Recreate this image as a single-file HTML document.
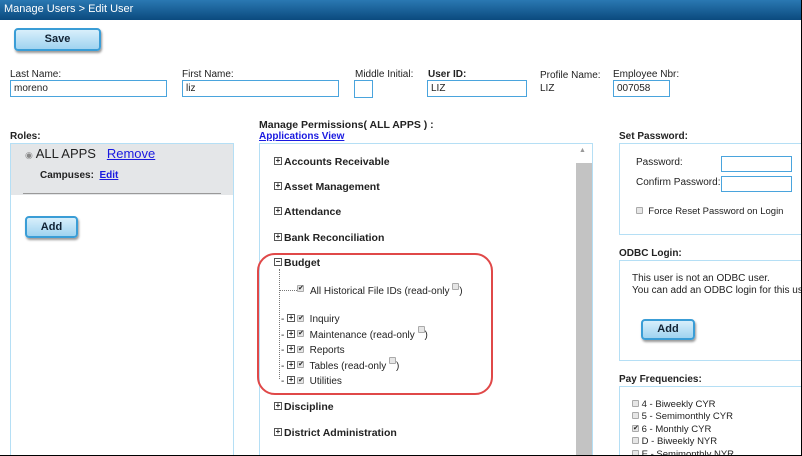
<!DOCTYPE html>
<html><head><style>
*{margin:0;padding:0;box-sizing:border-box}
html,body{width:802px;height:456px;overflow:hidden}
body{background:#fff;font-family:"Liberation Sans",sans-serif;font-size:10px;color:#222;position:relative}
.a{position:absolute;white-space:nowrap}
.hdr{left:0;top:0;width:802px;height:20px;background:linear-gradient(#2a78b2,#0b4a7e);color:#fff;font-size:11px;padding:3px 4px}
.btn{position:absolute;border:2px solid #3a9dd6;border-radius:4px;background:linear-gradient(#d8effb,#9fd3f0);font-weight:bold;font-size:11px;color:#123;text-align:center;box-shadow:1px 2px 2px #999}
.inp{position:absolute;border:1.5px solid #4aa4dd;height:17px;font-size:10px;padding:2px 3px;background:#fff}
.b{font-weight:bold}
.box{position:absolute;border:1px solid #b5dff5}
.pl{font-weight:bold;font-size:10.5px}
.pm{display:inline-block;width:8px;height:8px;border:1px solid #555;vertical-align:middle;margin-right:2px;font-size:8px;line-height:6px;text-align:center;font-weight:bold;position:relative;top:-1px}
.cb{display:inline-block;width:7px;height:7px;border:1px solid #aaa;background:#e6e6e6;border-radius:1px;font-size:7px;line-height:6px;text-align:center;vertical-align:middle;position:relative;top:-1px}
.up{top:-5px}
a{color:#1a1ae0}
.frame{position:absolute;left:0;top:0;width:802px;height:456px;border-right:1px solid #000;border-bottom:1px solid #000;pointer-events:none}
</style></head><body>
<div class="a hdr">Manage Users &gt; Edit User</div>
<div class="btn" style="left:14px;top:28px;width:87px;height:23px;line-height:19px">Save</div>
<div class="a" style="left:10px;top:69px">Last Name:</div>
<div class="inp" style="left:10px;top:80px;width:157px">moreno</div>
<div class="a" style="left:182px;top:69px">First Name:</div>
<div class="inp" style="left:182px;top:80px;width:157px">liz</div>
<div class="a" style="left:355px;top:69px">Middle Initial:</div>
<div class="inp" style="left:354px;top:80px;width:19px;height:18px"></div>
<div class="a b" style="left:428px;top:69px">User ID:</div>
<div class="inp" style="left:427px;top:80px;width:100px">LIZ</div>
<div class="a" style="left:540px;top:70px">Profile Name:</div>
<div class="a" style="left:540px;top:83px">LIZ</div>
<div class="a" style="left:613px;top:69px">Employee Nbr:</div>
<div class="inp" style="left:613px;top:80px;width:57px">007058</div>

<div class="a b" style="left:10px;top:131px">Roles:</div>
<div class="box" style="left:10px;top:143px;width:224px;height:320px"></div>
<div class="a" style="left:11px;top:144px;width:222px;height:51px;background:#e4e6e8"></div>
<div class="a" style="left:25px;top:146px;font-size:13px"><span style="color:#888;font-size:9px">◉</span> ALL APPS &nbsp;&nbsp;<a href="#" style="text-decoration:underline">Remove</a></div>
<div class="a b" style="left:40px;top:170px">Campuses: &nbsp;<a href="#">Edit</a></div>
<div class="a" style="left:23px;top:193px;width:198px;height:1px;background:#999"></div>
<div class="btn" style="left:25px;top:216px;width:53px;height:22px;line-height:18px">Add</div>

<div class="a b" style="left:259px;top:119px;font-size:10.5px">Manage Permissions( ALL APPS ) :</div>
<div class="a b" style="left:259px;top:131px"><a href="#">Applications View</a></div>
<div class="box" style="left:259px;top:143px;width:334px;height:320px"></div>
<div class="a" style="left:576px;top:163px;width:16px;height:300px;background:#c3c3c3"></div>
<div class="a" style="left:579px;top:147px;color:#999;font-size:7px">▲</div>
<div class="a pl" style="left:274px;top:156px"><span class="pm">+</span>Accounts Receivable</div>
<div class="a pl" style="left:274px;top:181px"><span class="pm">+</span>Asset Management</div>
<div class="a pl" style="left:274px;top:206px"><span class="pm">+</span>Attendance</div>
<div class="a pl" style="left:274px;top:232px"><span class="pm">+</span>Bank Reconciliation</div>
<div class="a pl" style="left:274px;top:257px"><span class="pm">−</span>Budget</div>
<div class="a" style="left:279px;top:269px;height:110px;border-left:1px dotted #777"></div>
<div class="a" style="left:279px;top:290px;width:18px;border-top:1px dotted #777"></div>
<div class="a" style="left:297px;top:284px"><span class="cb">✔</span></div>
<div class="a" style="left:310px;top:286px">All Historical File IDs (read-only <span class="cb up"></span>)</div>
<div class="a" style="left:281px;top:312px;line-height:15.5px;font-size:10px">
<div>- <span class="pm">+</span><span class="cb">✔</span>&nbsp; Inquiry</div>
<div>- <span class="pm">+</span><span class="cb">✔</span>&nbsp; Maintenance (read-only <span class="cb up"></span>)</div>
<div>- <span class="pm">+</span><span class="cb">✔</span>&nbsp; Reports</div>
<div>- <span class="pm">+</span><span class="cb">✔</span>&nbsp; Tables (read-only <span class="cb up"></span>)</div>
<div>- <span class="pm">+</span><span class="cb">✔</span>&nbsp; Utilities</div>
</div>
<div class="a" style="left:257px;top:253px;width:236px;height:142px;border:2.5px solid #e04848;border-radius:18px"></div>
<div class="a pl" style="left:274px;top:401px"><span class="pm">+</span>Discipline</div>
<div class="a pl" style="left:274px;top:427px"><span class="pm">+</span>District Administration</div>

<div class="a b" style="left:619px;top:131px">Set Password:</div>
<div class="box" style="left:619px;top:143px;width:190px;height:92px"></div>
<div class="a" style="left:636px;top:157px">Password:</div>
<div class="inp" style="left:721px;top:156px;width:71px;height:16px"></div>
<div class="a" style="left:636px;top:177px">Confirm Password:</div>
<div class="inp" style="left:721px;top:176px;width:71px;height:16px"></div>
<div class="a" style="left:636px;top:206px;font-size:9.5px"><span class="cb"></span>&nbsp; Force Reset Password on Login</div>
<div class="a b" style="left:619px;top:248px">ODBC Login:</div>
<div class="box" style="left:619px;top:260px;width:190px;height:101px"></div>
<div class="a" style="left:632px;top:273px;line-height:12px">This user is not an ODBC user.<br>You can add an ODBC login for this user</div>
<div class="btn" style="left:641px;top:319px;width:54px;height:21px;line-height:17px">Add</div>
<div class="a b" style="left:619px;top:374px">Pay Frequencies:</div>
<div class="box" style="left:619px;top:386px;width:190px;height:80px"></div>
<div class="a" style="left:632px;top:399px;line-height:12.4px;font-size:9.5px">
<div><span class="cb"></span> 4 - Biweekly CYR</div>
<div><span class="cb"></span> 5 - Semimonthly CYR</div>
<div><span class="cb">✔</span> 6 - Monthly CYR</div>
<div><span class="cb"></span> D - Biweekly NYR</div>
<div><span class="cb"></span> E - Semimonthly NYR</div>
</div>
<div class="frame"></div>
</body></html>
